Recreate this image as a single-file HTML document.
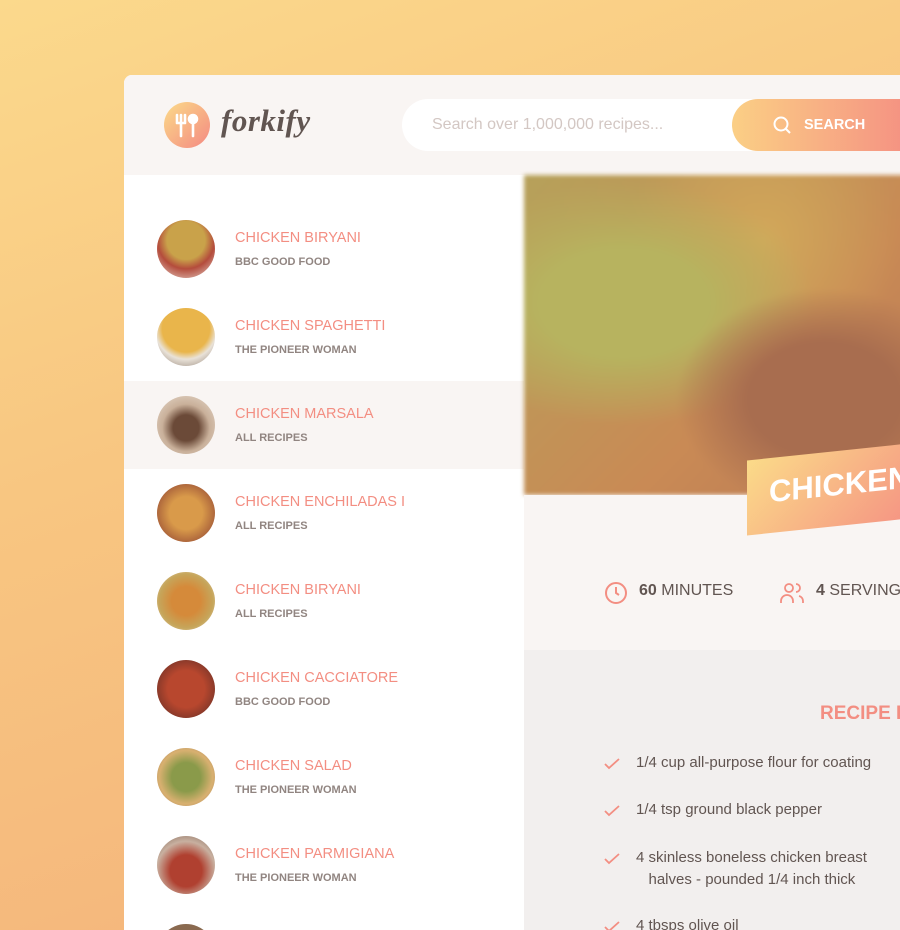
<!DOCTYPE html>
<html><head><style>
*{margin:0;padding:0;box-sizing:border-box}
html,body{width:900px;height:930px;overflow:hidden}
body{position:relative;font-family:"Liberation Sans",sans-serif;background:linear-gradient(160deg,#fbd98c 0%,#f8c681 40%,#f3b07a 100%)}
.card{position:absolute;left:124px;top:75px;width:776px;height:855px;background:#fff;border-radius:8px 0 0 0;overflow:hidden}
.hdr{position:absolute;left:0;top:0;width:800px;height:100px;background:#f9f5f3}
.logo{position:absolute;left:40px;top:27px;width:46px;height:46px;border-radius:50%;background:linear-gradient(135deg,#fbdb89,#f48982)}
.brand{position:absolute;left:97px;top:28px;font-family:"Liberation Serif",serif;font-style:italic;font-weight:bold;font-size:31px;color:#615551;letter-spacing:0.5px}
.search{position:absolute;left:278px;top:24px;width:520px;height:52px;background:#fff;border-radius:26px}
.search span{position:absolute;left:30px;top:17px;font-size:16px;color:#d3c7c3}
.btn{position:absolute;left:608px;top:24px;width:200px;height:52px;border-radius:26px;background:linear-gradient(90deg,#fbcf85,#f48982)}
.btn span{position:absolute;left:72px;top:18px;color:#fff;font-size:14.5px;font-weight:bold}
.list{position:absolute;left:0;top:100px;width:400px;height:755px;overflow:hidden}
.item{position:absolute;left:0;width:400px;height:88px}
.item.sel{background:#f9f5f3}
.th{position:absolute;left:33px;top:15px;width:58px;height:58px;border-radius:50%}
.t1{position:absolute;left:111px;top:25px;color:#f38e82;font-size:14.5px}
.t2{position:absolute;left:111px;top:51px;color:#918581;font-size:11px;font-weight:bold}
.img{position:absolute;left:400px;top:100px;width:400px;height:320px;background:radial-gradient(ellipse at 75% 70%,#a86d4f 0 18%,transparent 35%),radial-gradient(ellipse at 25% 40%,#b7b35f 0 20%,transparent 45%),radial-gradient(ellipse at 60% 20%,#d2a85a,transparent 40%),linear-gradient(135deg,#b6a15a,#c98a55 60%,#b87856);filter:blur(2px)}
.det{position:absolute;left:400px;top:420px;width:400px;height:155px;background:#f9f5f3}
.ban{position:absolute;left:623px;top:375px;width:200px;height:75px;background:linear-gradient(135deg,#fbdb89,#f48982);transform:skewY(-6deg)}
.ban span{position:absolute;left:22px;top:16px;color:#fff;font-weight:bold;font-size:31px}
.info{position:absolute;top:507px;font-size:16px;color:#615551;white-space:nowrap}
.ing{position:absolute;left:400px;top:575px;width:400px;height:400px;background:#f2efee}
.ih{position:absolute;left:696px;top:628px;color:#f38e82;font-weight:bold;font-size:19px;white-space:nowrap}
.li{position:absolute;left:512px;font-size:15px;color:#615551;line-height:22px;white-space:nowrap}
.chk{position:absolute;left:480px;width:16px;height:12px}
</style></head><body>
<div class="card">
<div class="hdr">
<div class="logo"><svg width="46" height="46" viewBox="0 0 46 46"><g stroke="#fff" stroke-width="2.6" fill="none" stroke-linecap="round"><path d="M13 13v8M17 13v8M21 13v8M13 21h8M17 21v13"/><circle cx="29" cy="17" r="4" fill="#fff"/><path d="M29 20v14"/></g></svg></div>
<div class="brand">forkify</div>
<div class="search"><span>Search over 1,000,000 recipes...</span></div>
<div class="btn"><svg style="position:absolute;left:40px;top:16px" width="20" height="20" viewBox="0 0 20 20"><circle cx="9" cy="9" r="6.5" stroke="#fff" stroke-width="2" fill="none"/><path d="M14 14l4 4" stroke="#fff" stroke-width="2"/></svg><span>SEARCH</span></div>
</div>
<div class="list">
<div class="item" style="top:30px"><div class="th" style="background:radial-gradient(circle at 50% 35%,#c9a24a 0 40%,#b44c3c 60%,#e9ddd6)"></div><div class="t1">CHICKEN BIRYANI</div><div class="t2">BBC GOOD FOOD</div></div>
<div class="item" style="top:118px"><div class="th" style="background:radial-gradient(circle at 50% 35%,#e9b54b 0 50%,#e9e2d8 65%,#8c7c70)"></div><div class="t1">CHICKEN SPAGHETTI</div><div class="t2">THE PIONEER WOMAN</div></div>
<div class="item sel" style="top:206px"><div class="th" style="background:radial-gradient(circle at 50% 55%,#6b4a38 0 30%,#c9b09a 55%,#e9ddd0)"></div><div class="t1">CHICKEN MARSALA</div><div class="t2">ALL RECIPES</div></div>
<div class="item" style="top:294px"><div class="th" style="background:radial-gradient(circle,#d99a4a 0 40%,#a8603a 75%,#5a3a2a)"></div><div class="t1">CHICKEN ENCHILADAS I</div><div class="t2">ALL RECIPES</div></div>
<div class="item" style="top:382px"><div class="th" style="background:radial-gradient(circle,#d58a3a 0 35%,#c6a55a 65%,#e9dcc8)"></div><div class="t1">CHICKEN BIRYANI</div><div class="t2">ALL RECIPES</div></div>
<div class="item" style="top:470px"><div class="th" style="background:radial-gradient(circle,#b8472e 0 45%,#8c3a2a 70%,#c8b8a8)"></div><div class="t1">CHICKEN CACCIATORE</div><div class="t2">BBC GOOD FOOD</div></div>
<div class="item" style="top:558px"><div class="th" style="background:radial-gradient(circle,#8a9a4a 0 35%,#d8b070 65%,#a88060)"></div><div class="t1">CHICKEN SALAD</div><div class="t2">THE PIONEER WOMAN</div></div>
<div class="item" style="top:646px"><div class="th" style="background:radial-gradient(circle at 50% 60%,#b04030 0 35%,#c8b0a0 65%,#7a6050)"></div><div class="t1">CHICKEN PARMIGIANA</div><div class="t2">THE PIONEER WOMAN</div></div>
<div class="item" style="top:734px"><div class="th" style="background:#8a6a50"></div></div>
</div>
<div class="img"></div>
<div class="det"></div>
<div class="ban"><span>CHICKEN</span></div>
<svg style="position:absolute;left:480px;top:506px" width="24" height="24" viewBox="0 0 24 24" fill="none" stroke="#f38e82" stroke-width="2"><circle cx="12" cy="12" r="10"/><path d="M12 6v6l3 2"/></svg>
<div class="info" style="left:515px"><b>60</b> MINUTES</div>
<svg style="position:absolute;left:656px;top:506px" width="24" height="24" viewBox="0 0 24 24" fill="none" stroke="#f38e82" stroke-width="1.8"><circle cx="9" cy="7" r="4"/><path d="M1 22v-2a6 6 0 0 1 12 0v2M16 3a4 4 0 0 1 0 8M19 15a5 5 0 0 1 4 5v2"/></svg>
<div class="info" style="left:692px"><b>4</b> SERVINGS</div>
<div class="ing"></div>
<div class="ih">RECIPE INGREDIENTS</div>
<svg class="chk" style="top:683px" viewBox="0 0 16 12"><path d="M1 6l4 4 10-9" stroke="#f38e82" stroke-width="1.8" fill="none"/></svg>
<div class="li" style="top:677px">1/4 cup all-purpose flour for coating</div>
<svg class="chk" style="top:730px" viewBox="0 0 16 12"><path d="M1 6l4 4 10-9" stroke="#f38e82" stroke-width="1.8" fill="none"/></svg>
<div class="li" style="top:724px">1/4 tsp ground black pepper</div>
<svg class="chk" style="top:778px" viewBox="0 0 16 12"><path d="M1 6l4 4 10-9" stroke="#f38e82" stroke-width="1.8" fill="none"/></svg>
<div class="li" style="top:772px">4 skinless boneless chicken breast<br>&nbsp;&nbsp;&nbsp;halves - pounded 1/4 inch thick</div>
<svg class="chk" style="top:846px" viewBox="0 0 16 12"><path d="M1 6l4 4 10-9" stroke="#f38e82" stroke-width="1.8" fill="none"/></svg>
<div class="li" style="top:840px">4 tbsps olive oil</div>
</div>
</body></html>
